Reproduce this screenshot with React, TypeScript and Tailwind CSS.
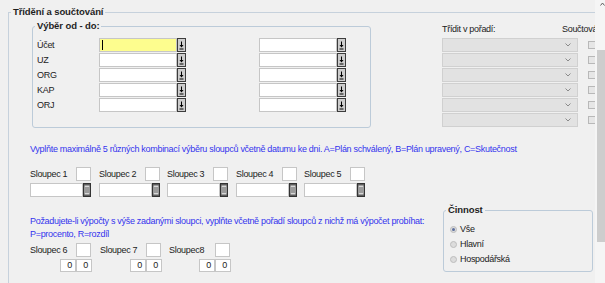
import React from "react";

const FONT = "font-['Liberation_Sans',Arial,sans-serif]";
const LEGEND = "ml-[2px] px-[2px] text-[9.5px] tracking-[-0.1px] leading-[12px] font-bold text-[#1e1e1e]";

function DropBtn() {
  return (
    <div className="w-[9px] h-[14px] border border-[#3c3c3c] bg-[#cdcdcd] flex items-center justify-center">
      <svg width="7" height="12" viewBox="0 0 7 12">
        <path d="M3.5 2.5v4" stroke="#000" strokeWidth="1" />
        <path d="M1.5 6h4l-2 2.5z" fill="#000" />
        <path d="M1.5 10h4" stroke="#000" strokeWidth="1" />
      </svg>
    </div>
  );
}

function CalBtn() {
  return (
    <div className="w-[8px] h-[14px] border border-[#333] bg-[#5e5e5e] flex items-center justify-center">
      <svg width="6" height="12" viewBox="0 0 6 12">
        <rect x="0.5" y="1.5" width="5" height="9" fill="#d8d8d8" />
        <path d="M1 4h4M1 6h4M1 8h4" stroke="#5e5e5e" strokeWidth="1" />
      </svg>
    </div>
  );
}

function Combo() {
  return (
    <div className="flex items-center h-[14px] mb-[1px]">
      <div className="w-[136px] h-[14px] border border-[#d0d0d0] bg-[#e2e2e2] flex items-center justify-end pr-[6px]">
        <svg width="6" height="4" viewBox="0 0 6 4">
          <path d="M0.5 0.5L3 3L5.5 0.5" stroke="#8a8a8a" fill="none" strokeWidth="1" />
        </svg>
      </div>
      <div className="ml-[10px] w-[8px] h-[8px] border border-[#b8b8b8] bg-[#e6e6e6]" />
    </div>
  );
}

const rows = ["Účet", "UZ", "ORG", "KAP", "ORJ"];

function SloupecTop({ label, ml }: { label: string; ml: string }) {
  return (
    <div className={`flex flex-col ${ml}`}>
      <div className="flex h-[14px]">
        <div className="w-[46px] leading-[14px] text-[#222]">{label}</div>
        <div className="w-[15px] h-[14px] border border-[#c6c6c6] bg-white" />
      </div>
      <div className="flex mt-[2px]">
        <div className="w-[53px] h-[14px] border border-[#c6c6c6] bg-white" />
        <CalBtn />
      </div>
    </div>
  );
}

function SloupecBottom({ label, ml }: { label: string; ml: string }) {
  return (
    <div className={`flex flex-col ${ml}`}>
      <div className="flex h-[14px]">
        <div className="w-[46px] leading-[14px] text-[#222]">{label}</div>
        <div className="w-[15px] h-[14px] border border-[#c6c6c6] bg-white" />
      </div>
      <div className="flex mt-[2px] ml-[30px]">
        <div className="w-[16px] h-[13px] border border-[#c6c6c6] bg-white text-right pr-[3px] leading-[11px] text-[#222]">0</div>
        <div className="w-[16px] h-[13px] border border-[#c6c6c6] bg-white text-right pr-[3px] leading-[11px] text-[#222]">0</div>
      </div>
    </div>
  );
}

function Radio({ checked, label }: { checked?: boolean; label: string }) {
  return (
    <div className="flex items-center h-[15px] pl-[6px]">
      <div className="w-[7px] h-[7px] rounded-full border border-[#bdbdbd] bg-[#dcdcdc] flex items-center justify-center">
        {checked && <div className="w-[3px] h-[3px] rounded-full bg-[#5d6f9e]" />}
      </div>
      <span className="ml-[3px] text-[#222]">{label}</span>
    </div>
  );
}

export default function App() {
  return (
    <div className={`w-[605px] h-[283px] overflow-hidden bg-[#f0f0f0] flex ${FONT} text-[9px] tracking-[-0.3px]`}>
      <div className="w-[595px] h-[283px] overflow-hidden">
        <fieldset className="ml-[8px] mt-[6px] w-[600px] border-t border-l border-[#c6d1dc] pb-[40px]">
          <legend className={LEGEND}>Třídění a součtování</legend>
          <div className="flex">
            <fieldset className="ml-[23px] mt-[2px] w-[339px] border border-[#bccbd9] rounded-[3px]">
              <legend className={LEGEND}>Výběr od - do:</legend>
              <div className="pl-[4px] pt-[6px] pb-[14px] flex flex-col gap-[1px]">
                {rows.map((r, i) => (
                  <div key={r} className="flex items-center h-[14px]">
                    <div className="w-[62px] text-[#222] leading-[14px]">{r}</div>
                    <div
                      className={
                        i === 0
                          ? "w-[78px] h-[14px] border border-[#c6c6c6] bg-[#fdfd8e] flex items-center"
                          : "w-[78px] h-[14px] border border-[#c6c6c6] bg-white"
                      }
                    >
                      {i === 0 && <div className="ml-[2px] w-[1px] h-[10px] bg-black" />}
                    </div>
                    <DropBtn />
                    <div className="ml-[73px] w-[78px] h-[14px] border border-[#c6c6c6] bg-white" />
                    <DropBtn />
                  </div>
                ))}
              </div>
            </fieldset>
            <div className="ml-[71px] flex flex-col">
              <div className="mt-[5px] flex h-[12px] leading-[12px] text-[#222] whitespace-nowrap">
                <div className="w-[120px]">Třídit v pořadí:</div>
                <div>Součtování</div>
              </div>
              <div className="mt-[3px] flex flex-col">
                {[0, 1, 2, 3, 4, 5].map((k) => (
                  <Combo key={k} />
                ))}
              </div>
            </div>
          </div>

          <div className="pl-[21px]">
            <div className="mt-[15px] leading-[12px] text-[#3434ee] whitespace-nowrap">
              Vyplňte maximálně 5 různých kombinací výběru sloupců včetně datumu ke dni. A=Plán schválený, B=Plán upravený, C=Skutečnost
            </div>
            <div className="flex mt-[12px]">
              <SloupecTop label="Sloupec 1" ml="ml-0" />
              <SloupecTop label="Sloupec 2" ml="ml-[8px]" />
              <SloupecTop label="Sloupec 3" ml="ml-[7px]" />
              <SloupecTop label="Sloupec 4" ml="ml-[8px]" />
              <SloupecTop label="Sloupec 5" ml="ml-[7px]" />
            </div>
            <div className="flex mt-[7px]">
              <div className="w-[413px] pt-[11px]">
                <div className="leading-[13px] text-[#3434ee] whitespace-nowrap">
                  Požadujete-li výpočty s výše zadanými sloupci, vyplňte včetně pořadí sloupců z nichž má výpočet probíhat:
                </div>
                <div className="leading-[13px] text-[#3434ee]">P=procento, R=rozdíl</div>
                <div className="flex mt-[2px]">
                  <SloupecBottom label="Sloupec 6" ml="ml-0" />
                  <SloupecBottom label="Sloupec 7" ml="ml-[8px]" />
                  <SloupecBottom label="Sloupec8" ml="ml-[7px]" />
                </div>
              </div>
              <fieldset className="w-[150px] border border-[#bccbd9] rounded-[3px]">
                <legend className={LEGEND}>Činnost</legend>
                <div className="pt-[6px] pb-[4px]">
                  <Radio checked label="Vše" />
                  <Radio label="Hlavní" />
                  <Radio label="Hospodářská" />
                </div>
              </fieldset>
            </div>
          </div>
        </fieldset>
      </div>
      <div className="w-[10px] h-[283px] bg-[#f5f5f5] flex flex-col">
        <svg className="ml-[5px] mt-[2px]" width="5" height="4" viewBox="0 0 5 4">
          <path d="M0.5 3.5L2.5 1L4.5 3.5" stroke="#606060" fill="none" strokeWidth="1" />
        </svg>
        <div className="ml-[2px] mt-[44px] w-[8px] h-[192px] bg-[#cdcdcd]" />
      </div>
    </div>
  );
}
